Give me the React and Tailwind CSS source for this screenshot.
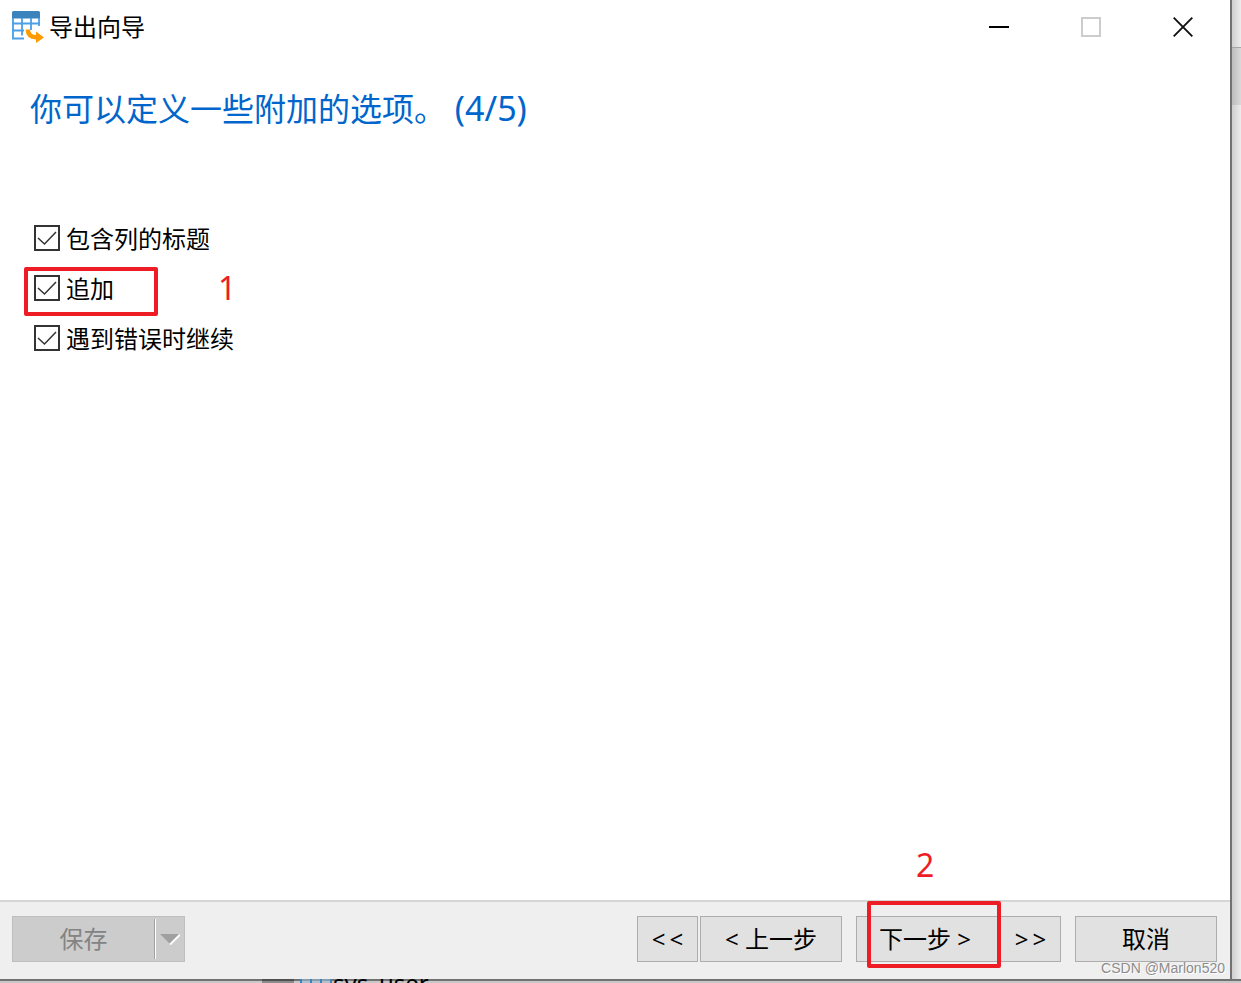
import { useState } from 'react'

const OPTIONS = [
  { id: 'header', label: '包含列的标题' },
  { id: 'append', label: '追加', mark: '1' },
  { id: 'continue', label: '遇到错误时继续' },
]

function ExportIcon() {
  return (
    <svg width="32" height="32" viewBox="0 0 32 32" aria-hidden="true">
      <path d="M0 7.500V1.500Q0 0 1.500 0h25Q28 0 28 1.500V7.500z" fill="#3b83bd" />
      <path
        d="M1 7v20.500M10 7v17.500M19 7v12M27 7v8M0 12.500h28M0 19.500h12M0 27.500h12"
        fill="none" stroke="#4a9fe6" strokeWidth="1.800"
      />
      <path d="M13.500 18.500h4.500q.5 5.500 6 5.500v-3.500l8 6-8 5.500v-3.500q-10-.500-10.500-10z" fill="#ff9a00" />
    </svg>
  )
}

function TitleBar() {
  return (
    <header className="flex h-[54px] items-center pl-3 pr-px">
      <ExportIcon />
      <h1 className="ml-[5px] text-2xl leading-8">导出向导</h1>
      <div className="ml-auto flex h-full">
        <button aria-label="最小化" className="flex w-[92px] items-center justify-center">
          <svg width="20" height="20" viewBox="0 0 20 20"><path d="M0 10h20" stroke="#000" strokeWidth="2" /></svg>
        </button>
        <button aria-label="最大化" disabled className="flex w-[92px] items-center justify-center">
          <svg width="20" height="20" viewBox="0 0 20 20"><path d="M1 1h18v18H1z" fill="none" stroke="#ccc" strokeWidth="2" /></svg>
        </button>
        <button aria-label="关闭" className="flex w-[92px] items-center justify-center">
          <svg width="20" height="20" viewBox="0 0 20 20"><path d="M.7.7l18.6 18.6M19.3.7L.7 19.3" stroke="#111" strokeWidth="1.9" /></svg>
        </button>
      </div>
    </header>
  )
}

function Option({ option, checked, onChange }) {
  return (
    <div className="relative flex h-[50px] items-center">
      <span className="grid">
        <input
          type="checkbox"
          id={option.id}
          checked={checked}
          onChange={onChange}
          className="peer col-start-1 row-start-1 size-[26px] appearance-none border-2 border-[#333] bg-white"
        />
        <svg
          viewBox="0 0 26 26"
          className="pointer-events-none invisible col-start-1 row-start-1 size-[26px] peer-checked:visible"
        >
          <path d="M4 13l6.500 6L22 7" fill="none" stroke="#333" strokeWidth="1.500" />
        </svg>
      </span>
      <label htmlFor={option.id} className="pl-[6px] pt-[2px] text-2xl leading-8">{option.label}</label>
      {option.mark && (
        <>
          <span className="absolute -left-[10px] top-[4px] h-[49px] w-[134px] rounded-[2px] border-4 border-[#ee1c25]" />
          <span className="absolute left-[184px] top-[5px] text-[32px] leading-10 text-[#ee1c25]">{option.mark}</span>
        </>
      )}
    </div>
  )
}

function WizardButton({ className, children }) {
  return (
    <button className={`h-[46px] border border-[#adadad] bg-[#e1e1e1] text-2xl leading-8 ${className}`}>
      {children}
    </button>
  )
}

function Footer() {
  return (
    <footer className="relative flex items-center border-t-2 border-[#d6d6d6] bg-[#efefef] pb-[17px] pl-3 pr-[13px] pt-[14px]">
      <div className="flex h-[46px] border border-[#bfbfbf] bg-[#ccc] text-[#838383]">
        <button disabled className="w-[141px] text-2xl leading-8">保存</button>
        <span className="my-[2px] w-[2px] border-l border-r border-l-[#a0a0a0] border-r-white" />
        <button disabled aria-label="更多保存选项" className="flex w-[28px] items-center justify-center">
          <svg width="20" height="12" viewBox="0 0 20 12">
            <path d="M10 11.500L20 1.500" stroke="#fff" strokeWidth="2" />
            <path d="M0 1h19l-9.500 9.500z" fill="#a0a0a0" />
          </svg>
        </button>
      </div>

      <div className="ml-auto flex">
        <WizardButton className="w-[61px]">&lt;&thinsp;&lt;</WizardButton>
        <WizardButton className="ml-[2px] w-[142px]">&lt; 上一步</WizardButton>
        <div className="relative ml-[14px]">
          <WizardButton className="w-[142px] pr-1">下一步 &gt;</WizardButton>
          <span className="pointer-events-none absolute -top-[15px] left-[11px] z-10 h-[67px] w-[134px] rounded-[2px] border-4 border-[#ee1c25]" />
          <span className="absolute -top-[71px] left-[60px] text-[32px] leading-10 text-[#ee1c25]">2</span>
        </div>
        <WizardButton className="ml-[2px] w-[61px]">&gt;&thinsp;&gt;</WizardButton>
        <WizardButton className="ml-[14px] w-[142px]">取消</WizardButton>
      </div>

      <span className="absolute bottom-[1px] right-[5px] font-['Liberation_Sans',sans-serif] text-sm leading-5 text-[#8c8c8c] [text-shadow:1px_1px_0_#fff]">
        CSDN @Marlon520
      </span>
    </footer>
  )
}

export default function App() {
  const [checked, setChecked] = useState({ header: true, append: true, continue: true })

  const toggle = (id) => setChecked({ ...checked, [id]: !checked[id] })

  return (
    <div className="flex h-screen flex-col overflow-hidden bg-[#c8c8c8] font-['Noto_Sans','Noto_Sans_CJK_SC',sans-serif] text-black">
      <div className="flex min-h-0 flex-1">
        <div className="flex min-w-0 flex-1 flex-col border-r-2 border-[#727272] bg-white">
          <TitleBar />
          <main className="flex-1 px-[30px]">
            <h2 className="pt-[34px] text-[32px] leading-10 text-[#0066cc]">
              你可以定义一些附加的选项。<span className="text-[34px]"> (4/5)</span>
            </h2>
            <div className="ml-1 mt-[84px]">
              {OPTIONS.map((option) => (
                <Option
                  key={option.id}
                  option={option}
                  checked={checked[option.id]}
                  onChange={() => toggle(option.id)}
                />
              ))}
            </div>
          </main>
          <Footer />
        </div>

        {/* Window behind the dialog */}
        <div className="flex w-[9px] flex-col bg-linear-to-r from-[#cfcfcf] to-[#ededed]">
          <div className="h-[48px] border-b border-[#a5a5a5]" />
          <div className="h-[57px] bg-linear-to-r from-[#bdbdbd] to-[#dadada]" />
        </div>
      </div>
      <div className="flex h-1 overflow-hidden bg-linear-to-b from-[#727272] from-50% to-[#c8c8c8] to-50% pl-[262px]">
        <span className="w-8 bg-black/30" />
        <span className="ml-[6px] flex w-[32px] justify-between border-x-2 border-[#3b83bd] bg-[#9dbdd6]/60 px-2">
          <span className="w-[2px] bg-[#3b83bd]" />
          <span className="w-[2px] bg-[#3b83bd]" />
        </span>
        <span className="-mt-[12px] ml-px text-2xl leading-8">sys_user</span>
      </div>
    </div>
  )
}
